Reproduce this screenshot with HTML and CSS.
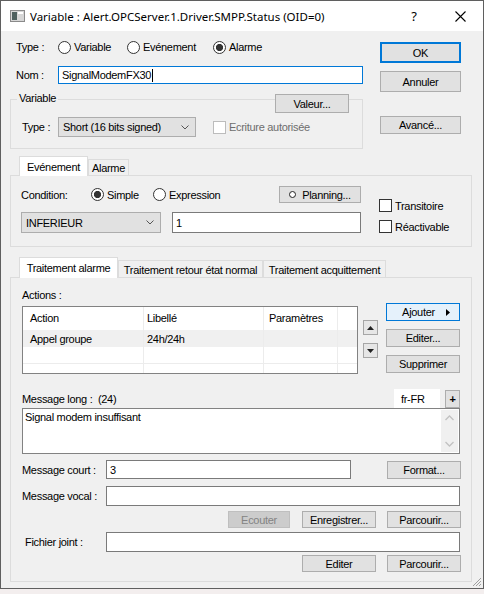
FILE: index.html
```html
<!DOCTYPE html>
<html>
<head>
<meta charset="utf-8">
<link rel="stylesheet" href="styles.css">
</head>
<body>
<div class="win">
  <div class="titlebar">
    <svg class="appicon" width="15" height="12" viewBox="0 0 15 12">
      <rect x="0.5" y="0.5" width="14" height="11" fill="#d6d6d6" stroke="#8a8a8a"/>
      <rect x="2" y="2" width="5" height="8" fill="#4e605e"/>
      <rect x="8" y="2" width="5" height="2" fill="#ffffff"/>
    </svg>
    <span class="title">Variable : Alert.OPCServer.1.Driver.SMPP.Status (OID=0)</span>
    <span class="help">?</span>
    <svg class="close" width="11" height="11" viewBox="0 0 11 11">
      <path d="M0.5 0.5 L10.5 10.5 M10.5 0.5 L0.5 10.5" stroke="#000" stroke-width="1.1" fill="none"/>
    </svg>
  </div>

  <div class="body">
    <div class="top">
      <div class="top-left">
        <div class="type-row">
          <span class="lbl-top">Type :</span>
          <span class="radio r-var"><span class="circle"></span>Variable</span>
          <span class="radio r-evt"><span class="circle"></span>Evénement</span>
          <span class="radio"><span class="circle on"></span>Alarme</span>
        </div>
        <div class="nom-row">
          <span class="lbl-top">Nom :</span>
          <div class="input focus nom-input">SignalModemFX30<span class="caret"></span></div>
        </div>
        <div class="group">
          <span class="group-title">Variable</span>
          <div class="btn btn-valeur">Valeur...</div>
          <div class="group-row">
            <span class="lbl-gtype">Type :</span>
            <div class="select sel-type"><span>Short (16 bits signed)</span>
              <svg class="chev" width="8" height="5" viewBox="0 0 8 5"><path d="M0.5 0.5 L4 4 L7.5 0.5" stroke="#555" fill="none"/></svg>
            </div>
            <span class="check disabled"><span class="box"></span>Ecriture autorisée</span>
          </div>
        </div>
      </div>
      <div class="top-right">
        <div class="btn btn-ok">OK</div>
        <div class="btn btn-ann">Annuler</div>
        <div class="btn btn-av">Avancé...</div>
      </div>
    </div>

    <div class="tabs ev-tabs">
      <div class="tab sel ev-t1">Evénement</div>
      <div class="tab ev-t2">Alarme</div>
    </div>
    <div class="panel ev-panel">
      <div class="ev-left">
        <div class="ev-row1">
          <span class="lbl-cond">Condition:</span>
          <span class="radio r-simple"><span class="circle on"></span>Simple</span>
          <span class="radio"><span class="circle"></span>Expression</span>
          <div class="btn btn-planning"><span class="plan-ico"></span>Planning...</div>
        </div>
        <div class="ev-row2">
          <div class="select sel-cond"><span>INFERIEUR</span>
            <svg class="chev" width="8" height="5" viewBox="0 0 8 5"><path d="M0.5 0.5 L4 4 L7.5 0.5" stroke="#555" fill="none"/></svg>
          </div>
          <div class="input val-input">1</div>
        </div>
      </div>
      <div class="ev-right">
        <span class="check"><span class="box"></span>Transitoire</span>
        <span class="check"><span class="box"></span>Réactivable</span>
      </div>
    </div>

    <div class="tabs tr-tabs">
      <div class="tab sel tr-t1">Traitement alarme</div>
      <div class="tab tr-t2">Traitement retour état normal</div>
      <div class="tab tr-t3">Traitement acquittement</div>
    </div>
    <div class="panel tr-panel">
      <div class="actions-lbl">Actions :</div>
      <div class="actions">
        <div class="table">
          <div class="cell hd c1">Action</div>
          <div class="cell hd c2">Libellé</div>
          <div class="cell hd c3">Paramètres</div>
          <div class="cell hd c4"></div>
          <div class="cell r1 c1">Appel groupe</div>
          <div class="cell r1 c2">24h/24h</div>
          <div class="cell r1 c3"></div>
          <div class="cell r1 c4"></div>
          <div class="cell r2 c1"></div>
          <div class="cell r2 c2"></div>
          <div class="cell r2 c3"></div>
          <div class="cell r2 c4"></div>
          <div class="cell r3 c1"></div>
          <div class="cell r3 c2"></div>
          <div class="cell r3 c3"></div>
          <div class="cell r3 c4"></div>
        </div>
        <div class="arrows">
          <div class="abtn"><svg width="7" height="4" viewBox="0 0 7 4"><path d="M0 4 L3.5 0 L7 4 Z" fill="#222"/></svg></div>
          <div class="abtn"><svg width="7" height="4" viewBox="0 0 7 4"><path d="M0 0 L3.5 4 L7 0 Z" fill="#222"/></svg></div>
        </div>
        <div class="abtns">
          <div class="btn btn-ajouter">Ajouter<svg class="tri" width="4" height="7" viewBox="0 0 4 7"><path d="M0 0 L4 3.5 L0 7 Z" fill="#000"/></svg></div>
          <div class="btn">Editer...</div>
          <div class="btn">Supprimer</div>
        </div>
      </div>

      <div class="ml-head">
        <span class="ml-lbl">Message long :&nbsp;&nbsp;(24)</span>
        <div class="lang">fr-FR</div>
        <div class="btn btn-plus">+</div>
      </div>
      <div class="textarea">
        <span class="ta-text">Signal modem insuffisant</span>
        <div class="scroll">
          <svg width="9" height="6" viewBox="0 0 9 6"><path d="M0.5 5 L4.5 1 L8.5 5" stroke="#c2c2c2" stroke-width="1.3" fill="none"/></svg>
          <svg width="9" height="6" viewBox="0 0 9 6"><path d="M0.5 1 L4.5 5 L8.5 1" stroke="#c2c2c2" stroke-width="1.3" fill="none"/></svg>
        </div>
      </div>

      <div class="frow court-row">
        <span class="flbl">Message court :</span>
        <div class="input court-input">3</div>
        <div class="btn btn-format">Format...</div>
      </div>
      <div class="frow vocal-row">
        <span class="flbl">Message vocal :</span>
        <div class="input wide-input"></div>
      </div>
      <div class="brow brow1">
        <div class="btn btn-dis btn-ecouter">Ecouter</div>
        <div class="btn btn-std">Enregistrer...</div>
        <div class="btn btn-std">Parcourir...</div>
      </div>
      <div class="frow fj-row">
        <span class="flbl fj-lbl">Fichier joint :</span>
        <div class="input wide-input"></div>
      </div>
      <div class="brow brow2">
        <div class="btn btn-std">Editer</div>
        <div class="btn btn-std">Parcourir...</div>
      </div>
    </div>
  </div>

  <svg class="grip" width="11" height="11" viewBox="0 0 11 11">
    <path d="M10 2 L2 10 M10 5 L5 10 M10 8 L8 10" stroke="#a0a0a0" stroke-width="1" fill="none"/>
  </svg>
</div>
</body>
</html>
```

FILE: styles.css
```css
* { box-sizing: border-box; }
html { background: #f3eeee; }
html, body { margin: 0; padding: 0; }
body {
  width: 484px;
  height: 594px;
  font-family: "Liberation Sans", Arial, sans-serif;
  font-size: 11px;
  letter-spacing: -0.3px;
  color: #000;
  overflow: hidden;
}

.win {
  width: 484px;
  height: 589px;
  border: 1px solid #5f5f5f;
  background: #f0f0f0;
  position: relative;
}

/* title bar */
.titlebar {
  height: 30px;
  background: #fff;
  display: flex;
  align-items: center;
}
.appicon { margin-left: 9px; flex: none; }
.title {
  margin-left: 5px;
  font-family: "Noto Sans", "Open Sans", sans-serif;
  font-size: 11.5px;
  letter-spacing: 0;
  white-space: nowrap;
}
.help {
  margin-left: auto;
  font-family: "Noto Sans", sans-serif;
  font-size: 13px;
  letter-spacing: 0;
}
.close { margin-left: 38px; margin-right: 17px; }

/* body */
.body { padding-left: 9px; }
.top { display: flex; }
.top-left { width: 353px; }
.top-right { margin-left: 17px; width: 81px; padding-top: 11px; display: flex; flex-direction: column; }

.type-row { margin-top: 8px; height: 16px; display: flex; align-items: center; }
.lbl-top { width: 48px; padding-left: 6px; flex: none; }
.radio { display: flex; align-items: center; white-space: nowrap; }
.circle {
  width: 13px; height: 13px; flex: none;
  border: 1px solid #333;
  border-radius: 50%;
  background: #fff;
  margin-right: 3px;
}
.circle.on { background: radial-gradient(circle, #333 0, #333 3.3px, #fff 3.9px); }
.r-var { width: 69px; }
.r-evt { width: 86px; }

.nom-row { margin-top: 11px; height: 18px; display: flex; align-items: center; }
.input {
  background: #fff;
  border: 1px solid #7a7a7a;
  display: flex;
  align-items: center;
  padding-left: 3px;
  white-space: nowrap;
}
.focus { border-color: #0078d7; }
.nom-input { width: 305px; height: 18px; }
.caret { width: 1px; height: 13px; background: #000; margin-left: 1px; }

.group {
  margin-top: 15px;
  height: 50px;
  border: 1px solid #dcdcdc;
  position: relative;
}
.group-title {
  position: absolute;
  left: 6px;
  top: -8px;
  padding: 0 2px;
  background: #f0f0f0;
}
.btn {
  background: #e1e1e1;
  border: 1px solid #adadad;
  display: flex;
  align-items: center;
  justify-content: center;
  white-space: nowrap;
}
.btn-valeur {
  position: absolute;
  left: 264px;
  top: -6px;
  width: 74px;
  height: 19px;
}
.group-row { margin-top: 17px; height: 20px; display: flex; align-items: center; }
.lbl-gtype { width: 47px; padding-left: 11px; flex: none; }
.select {
  background: #e1e1e1;
  border: 1px solid #adadad;
  display: flex;
  align-items: center;
  justify-content: space-between;
  padding: 0 6px 0 4px;
}
.sel-type { width: 138px; height: 20px; }
.check { display: flex; align-items: center; white-space: nowrap; }
.box { width: 13px; height: 13px; border: 1px solid #333; background: #fff; margin-right: 3px; flex: none; }
.group-row .check { margin-left: 17px; }
.check.disabled { color: #6d6d6d; }
.check.disabled .box { border-color: #bcbcbc; }

.btn-ok { height: 21px; border: 2px solid #0078d7; }
.btn-ann { margin-top: 8px; height: 21px; }
.btn-av { margin-top: 24px; height: 18px; }

/* tabs */
.tabs { display: flex; align-items: flex-end; padding-left: 9px; }
.tab {
  border: 1px solid #dcdcdc;
  border-bottom: none;
  background: #f0f0f0;
  display: flex;
  align-items: center;
  justify-content: center;
  white-space: nowrap;
  padding-top: 1px;
}
.tab.sel {
  background: #fff;
  margin-bottom: -1px;
  position: relative;
  z-index: 1;
  padding-top: 0;
}
.ev-tabs { margin-top: 7px; height: 19px; }
.ev-t1 { width: 69px; height: 20px; }
.ev-t2 { width: 41px; height: 16px; }
.tr-tabs { margin-top: 10px; height: 20px; }
.tr-t1 { width: 99px; height: 21px; }
.tr-t2 { width: 145px; height: 17px; }
.tr-t3 { width: 123px; height: 17px; }

.panel {
  border: 1px solid #dcdcdc;
  background: #f0f0f0;
  width: 462px;
}

/* event panel */
.ev-panel { height: 72px; display: flex; }
.ev-left { margin-left: 10px; width: 340px; }
.ev-row1 { margin-top: 10px; height: 17px; display: flex; align-items: center; }
.lbl-cond { width: 70px; flex: none; }
.r-simple { width: 62px; }
.btn-planning { margin-left: auto; width: 82px; height: 17px; }
.plan-ico {
  width: 7px; height: 7px;
  border: 1.5px solid #222;
  border-radius: 50%;
  background: #fff;
  margin-right: 6px;
}
.ev-row2 { margin-top: 9px; height: 21px; display: flex; }
.sel-cond { width: 140px; height: 21px; }
.val-input { margin-left: 11px; flex: 1; height: 21px; }
.ev-right { margin-left: 18px; padding-top: 23px; display: flex; flex-direction: column; gap: 8px; }
.ev-right .check { height: 13px; }

/* treatment panel */
.tr-panel { height: 305px; }
.actions-lbl { margin-top: 10px; padding-left: 11px; height: 14px; line-height: 14px; }
.actions { display: flex; margin-top: 1px; padding-left: 11px; }
.table {
  margin-top: 3px;
  width: 336px;
  height: 68px;
  border: 1px solid #828282;
  background: #fff;
  display: grid;
  grid-template-columns: 121px 120px 74px 19px;
  grid-template-rows: 23px 17px 17px 9px;
  overflow: hidden;
}
.cell {
  display: flex;
  align-items: center;
  white-space: nowrap;
  border-right: 1px solid #ececec;
}
.cell.c4 { border-right: none; }
.cell.c1 { padding-left: 7px; }
.cell.c2 { padding-left: 3px; }
.cell.c3 { padding-left: 5px; }
.cell.hd { padding-bottom: 2px; }
.cell.r1 { background: #f0f0f0; }
.cell.r2 { border-bottom: 1px solid #ececec; }

.arrows { margin-left: 5px; padding-top: 17px; display: flex; flex-direction: column; gap: 8px; }
.abtn {
  width: 15px; height: 15px;
  background: #e6e6e6;
  border: 1px solid #a6a6a6;
  display: flex; align-items: center; justify-content: center;
}
.abtns { margin-left: 8px; width: 74px; display: flex; flex-direction: column; gap: 8px; }
.abtns .btn { height: 18px; }
.btn-ajouter { border-color: #0078d7 !important; background: #e5f1fb !important; padding-left: 6px; }
.tri { margin-left: 11px; }

.ml-head { margin-top: 15px; height: 19px; display: flex; align-items: center; padding: 0 11px; }
.lang { margin-left: auto; width: 46px; height: 19px; background: #fff; padding-left: 7px; display: flex; align-items: center; }
.btn-plus { margin-left: 5px; width: 15px; height: 18px; font-weight: bold; font-size: 11px; }
.textarea {
  margin-left: 11px;
  width: 438px;
  height: 46px;
  border: 1px solid #828282;
  background: #fff;
  display: flex;
  justify-content: space-between;
}
.ta-text { padding: 2px 0 0 2px; white-space: nowrap; }
.scroll {
  width: 17px;
  margin: 1px 1px 1px 0;
  background: #f0f0f0;
  display: flex;
  flex-direction: column;
  justify-content: space-between;
  align-items: center;
  padding: 5px 0 5px;
}

.frow { display: flex; align-items: center; padding-left: 11px; }
.flbl { width: 84px; flex: none; white-space: nowrap; }
.fj-lbl { padding-left: 3px; }
.court-row { margin-top: 6px; height: 19px; }
.court-input { width: 245px; height: 19px; }
.btn-format { margin-left: auto; margin-right: 10px; width: 74px; height: 18px; }
.vocal-row { margin-top: 7px; height: 20px; }
.wide-input { width: 354px; height: 20px; }
.fj-row { margin-top: 4px; height: 20px; }
.brow { display: flex; justify-content: flex-end; padding-right: 10px; gap: 11px; }
.brow .btn { height: 17px; }
.brow1 { margin-top: 5px; }
.brow2 { margin-top: 3px; }
.btn-std { width: 74px; }
.btn-ecouter { width: 62px; margin-right: 1px; }
.btn-dis { background: #cccccc; border-color: #bfbfbf; color: #838383; }

.grip { position: absolute; right: 1px; bottom: 1px; }
```
